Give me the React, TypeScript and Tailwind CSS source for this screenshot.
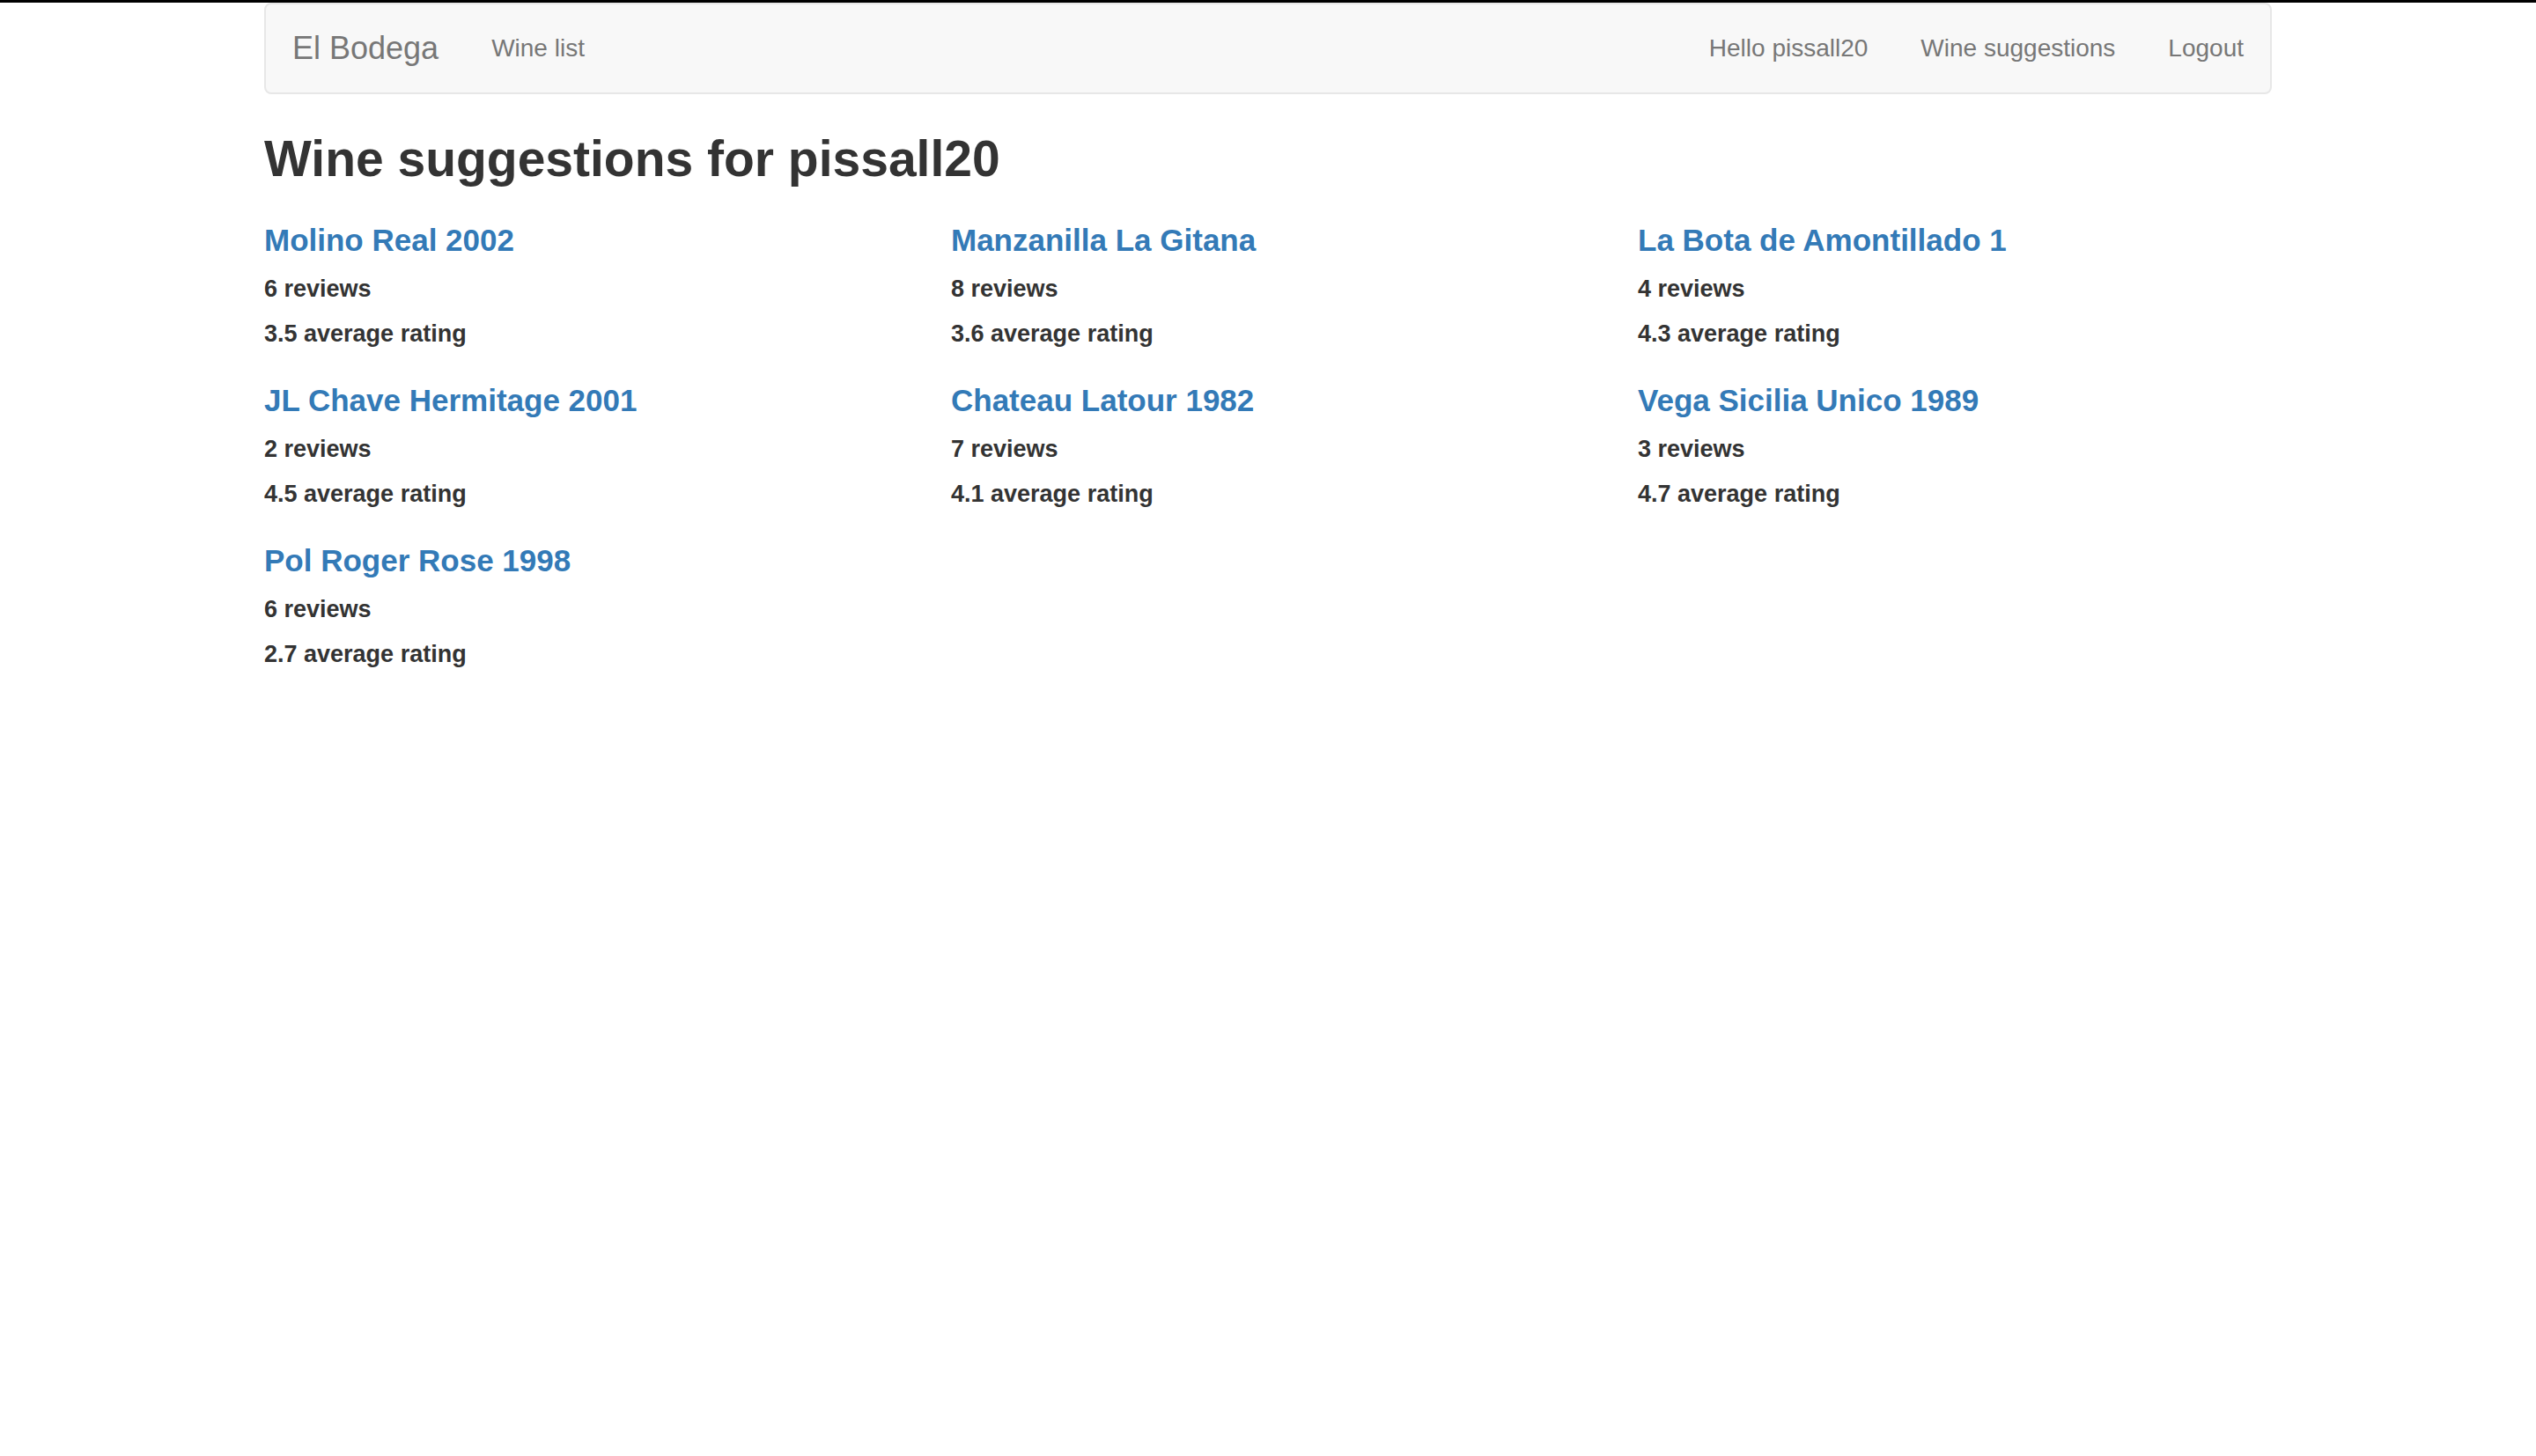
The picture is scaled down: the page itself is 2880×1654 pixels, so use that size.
const wines = [
  { name: 'Molino Real 2002', reviews: 6, rating: '3.5' },
  { name: 'Manzanilla La Gitana', reviews: 8, rating: '3.6' },
  { name: 'La Bota de Amontillado 1', reviews: 4, rating: '4.3' },
  { name: 'JL Chave Hermitage 2001', reviews: 2, rating: '4.5' },
  { name: 'Chateau Latour 1982', reviews: 7, rating: '4.1' },
  { name: 'Vega Sicilia Unico 1989', reviews: 3, rating: '4.7' },
  { name: 'Pol Roger Rose 1998', reviews: 6, rating: '2.7' },
];

function NavLink({ children }: { children: React.ReactNode }) {
  return (
    <a href="#" className="block px-[30px] py-[30px] text-[28px] leading-[40px] text-[#777] no-underline">
      {children}
    </a>
  );
}

export default function App() {
  return (
    <div className="min-h-screen bg-white font-['Liberation_Sans',Arial,sans-serif] text-[#333]">
      {/* top edge */}
      <div className="h-[3px] bg-black" />

      <div className="mx-auto w-[2280px]">
        {/* Navbar */}
        <nav className="flex h-[104px] items-center justify-between rounded-[8px] border-2 border-[#e7e7e7] bg-[#f8f8f8]">
          <div className="flex items-center">
            <a href="#" className="block px-[30px] py-[30px] text-[36px] leading-[40px] text-[#777] no-underline">
              El Bodega
            </a>
            <NavLink>Wine list</NavLink>
          </div>
          <div className="flex items-center">
            <NavLink>Hello pissall20</NavLink>
            <NavLink>Wine suggestions</NavLink>
            <NavLink>Logout</NavLink>
          </div>
        </nav>

        <h2 className="mt-[40px] mb-[20px] text-[57px] leading-[66px] font-bold text-[#333]">
          Wine suggestions for pissall20
        </h2>

        <div className="grid grid-cols-3 gap-x-[60px]">
          {wines.map((wine) => (
            <div key={wine.name} className="flex flex-col py-[20px]">
              <a href="#" className="text-[35px] leading-[40px] font-bold text-[#337ab7] no-underline">
                {wine.name}
              </a>
              <h5 className="mt-[20px] text-[27px] leading-[31px] font-bold text-[#333]">
                {wine.reviews} reviews
              </h5>
              <h5 className="mt-[20px] text-[27px] leading-[31px] font-bold text-[#333]">
                {wine.rating} average rating
              </h5>
            </div>
          ))}
        </div>
      </div>
    </div>
  );
}
